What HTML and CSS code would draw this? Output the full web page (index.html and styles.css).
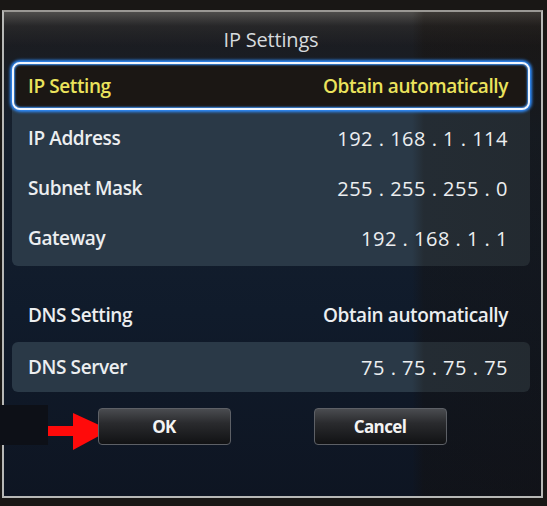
FILE: index.html
```html
<!DOCTYPE html>
<html>
<head>
<meta charset="utf-8">
<link rel="stylesheet" href="styles.css">
</head>
<body>
<div class="screen">
  <div class="dialog">
    <div class="title">IP Settings</div>
    <div class="panel panel-main">
      <div class="row row-focus"><span>IP Setting</span><span>Obtain automatically</span></div>
      <div class="row"><span>IP Address</span><span class="num">192 . 168 . 1 . 114</span></div>
      <div class="row"><span>Subnet Mask</span><span class="num">255 . 255 . 255 . 0</span></div>
      <div class="row"><span>Gateway</span><span class="num">192 . 168 . 1 . 1</span></div>
    </div>
    <div class="row row-plain"><span>DNS Setting</span><span>Obtain automatically</span></div>
    <div class="panel panel-dns">
      <div class="row"><span>DNS Server</span><span class="num">75 . 75 . 75 . 75</span></div>
    </div>
    <div class="buttons">
      <div class="btn">OK</div>
      <div class="btn">Cancel</div>
    </div>
    <div class="shade"></div>
  </div>
  <div class="patch"></div>
  <svg class="arrow" width="64" height="40" viewBox="0 0 64 40">
    <rect x="0" y="13" width="30" height="10" fill="#ff0a0a"/>
    <polygon points="25,0 62,17 25,37" fill="#ff0a0a"/>
  </svg>
</div>
</body>
</html>
```

FILE: styles.css
```css
* { box-sizing: border-box; }
html, body {
  margin: 0;
  padding: 0;
  background: #191715;
  width: 547px;
  height: 506px;
  overflow: hidden;
}
.screen {
  position: relative;
  width: 547px;
  height: 506px;
  padding: 10px 0 0 2px;
  font-family: "Open Sans", "Liberation Sans", sans-serif;
}
.dialog {
  position: relative;
  width: 541px;
  height: 488px;
  border: 2px solid #b7b8b6;
  border-top-color: #9a9894;
  background:
    linear-gradient(180deg, rgba(120,118,112,0.55) 0px, rgba(60,58,56,0.35) 14px, rgba(30,30,32,0) 34px),
    linear-gradient(180deg, #1c1c1f 0px, #1a1d23 50px, #15202e 120px, #101b2b 300px, #0e1522 488px);
  padding: 0 11px 0 8px;
  display: flex;
  flex-direction: column;
}
.title {
  height: 50px;
  display: flex;
  align-items: center;
  justify-content: center;
  padding-top: 4px;
  color: #d6dadd;
  font-size: 20px;
  font-weight: 400;
  letter-spacing: -0.2px;
}
.panel {
  background: #2a3947;
  border-radius: 6px;
}
.panel-main {
  padding-bottom: 3px;
}
.row {
  position: relative;
  z-index: 2;
  height: 50px;
  display: flex;
  align-items: center;
  justify-content: space-between;
  padding: 0 22px 0 16px;
  color: #eceef0;
  font-size: 19px;
  font-weight: 600;
  letter-spacing: -0.4px;
}
.row-focus {
  height: 48px;
  margin-bottom: 3px;
  background: #1b1714;
  border: 2px solid #f2f7ff;
  border-radius: 8px;
  box-shadow: 0 0 3px 2px #2f8dff, inset 0 0 2px 1px #3a8ff0;
  color: #ebe35c;
  padding: 0 20px 0 14px;
}
.num {
  font-size: 20px;
  font-weight: 500;
  letter-spacing: 0.5px;
}
.row-plain {
  margin-top: 24px;
  height: 50px;
}
.panel-dns {
  margin-top: 2px;
}
.buttons {
  position: relative;
  z-index: 2;
  margin-top: 16px;
  display: flex;
  justify-content: center;
  gap: 83px;
  padding-left: 2px;
}
.btn {
  width: 133px;
  height: 37px;
  border: 1px solid #5d6066;
  border-radius: 4px;
  background: linear-gradient(180deg, #4a4c50 0%, #2a2b2e 40%, #111214 100%);
  color: #f4f4f4;
  font-size: 17px;
  font-weight: 700;
  letter-spacing: -0.6px;
  display: flex;
  align-items: center;
  justify-content: center;
}
.shade {
  position: absolute;
  z-index: 1;
  top: 0;
  bottom: 0;
  left: 408px;
  right: 0;
  background: linear-gradient(90deg, rgba(22,14,6,0) 0px, rgba(22,14,6,0.3) 12px, rgba(22,14,6,0.35) 100%);
  pointer-events: none;
}
.patch {
  position: absolute;
  left: 0;
  top: 405px;
  width: 48px;
  height: 40px;
  background: #0d1017;
}
.arrow {
  position: absolute;
  left: 48px;
  top: 413px;
}
```
